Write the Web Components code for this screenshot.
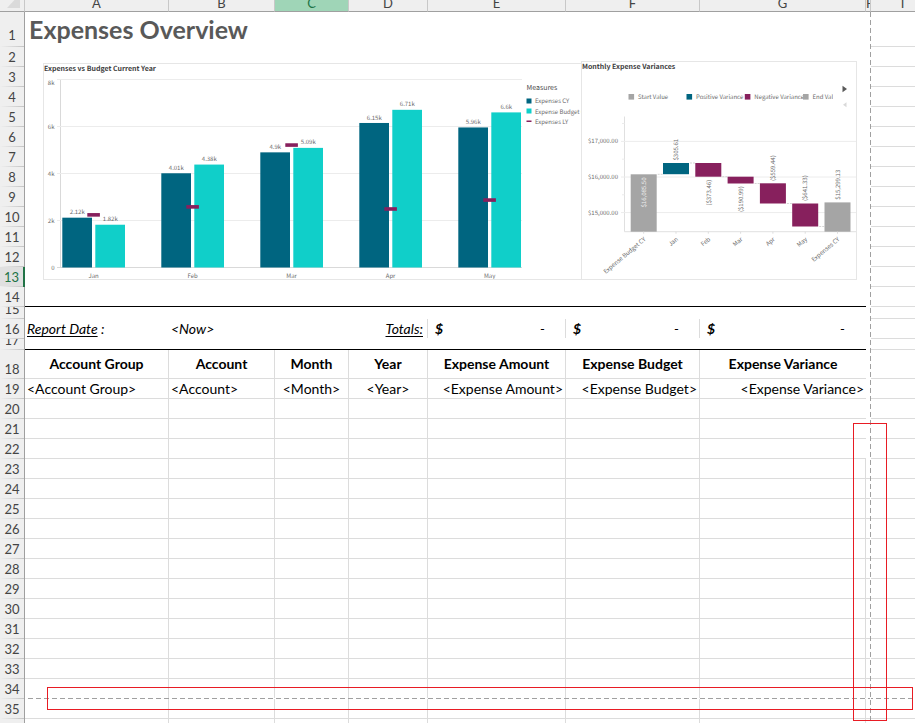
<!DOCTYPE html>
<html lang="en">
<head>
<meta charset="utf-8">
<title>Expenses Overview</title>
<style>
body {
  margin: 0;
  background: white;
  font-family: Lato, "Liberation Sans", sans-serif;
  font-size: 14px;
  color: black;
}
</style>
</head>
<body>
<work-sheet>
  <expense-bars slot="objects"></expense-bars>
  <variance-waterfall slot="objects"></variance-waterfall>
  <page-breaks slot="objects"></page-breaks>
</work-sheet>

<script>
var sheetTemplate = `
<style>
:host {
  --head: #efefef;
  --line: #dcdcdc;
  --edge: #a0a0a0;
  --accent: #217346;
  display: block;
  position: relative;
  height: 100vh;
  overflow: hidden;
}

table {
  table-layout: fixed;
  width: 935px;
  border-collapse: separate;
  border-spacing: 0;
  line-height: 16px;
}

th, td {
  box-sizing: border-box;
  padding: 0;
  border: 0 solid var(--line);
  text-align: left;
  vertical-align: top;
  white-space: nowrap;
  font-weight: normal;
}

th {
  font-size: 13px;
}

th > div, td > div {
  display: flex;
  box-sizing: border-box;
  align-items: flex-end;
  overflow: hidden;
}

thead th {
  background: var(--head);
  color: #444;
  border-bottom: 1px solid var(--edge);
  border-right: 1px solid #c8c8c8;
}

thead th > div {
  height: 11px;
  justify-content: center;
}

thead th.narrow > div {
  justify-content: flex-start;
}

thead th.selected {
  background: #9fd5b7;
  color: var(--accent);
}

.corner svg {
  display: block;
  margin-left: auto;
  margin-right: 3px;
}

tbody th {
  background: linear-gradient(to right, var(--head), #c4c4c4) bottom / 100% 1px no-repeat var(--head);
  color: #444;
  border-right: 1px solid var(--edge);
}

tbody th > div {
  justify-content: center;
}

tbody th.selected {
  background-color: #e0e0e0;
  color: var(--accent);
  border-right: 2px solid var(--accent);
}

td > div {
  padding: 0 2px 1px;
}

.lined td {
  border-right-width: 1px;
}

.lined td, td.outside {
  border-bottom-width: 1px;
}

td.outside {
  border-right-width: 0;
}

.short td.gutter, .open td.gutter {
  border-width: 0;
}

.lined td.gutter, .short td.last {
  border-right-width: 0;
}

.ruled td.inside {
  border-bottom: 1px solid black;
}

td.money {
  font-style: italic;
}

td.money > div {
  justify-content: space-between;
  padding: 0 21px 1px 7px;
}

.tick > div {
  box-shadow: inset -1px 0 var(--line);
}

.title {
  font-size: 25px;
  font-weight: bold;
  color: #595959;
  line-height: 32px;
}

.title > div {
  padding: 0 4px;
  align-items: center;
  overflow: visible;
}

.center > div {
  justify-content: center;
}

.right > div {
  justify-content: flex-end;
}

.middle > div {
  align-items: center;
}

.bold {
  font-weight: bold;
}

.italic {
  font-style: italic;
}

u {
  text-underline-offset: 2px;
}

.pad > div {
  padding-right: 5px;
}
</style>
<table>
  <colgroup as="cols"></colgroup>
  <thead><tr as="letters"></tr></thead>
  <tbody as="rows"></tbody>
</table>
<slot name="objects"></slot>
`;

var columns = [
  ["A", 144], ["B", 106], ["C", 74], ["D", 79], ["E", 138],
  ["F", 134], ["G", 166], ["H", 5], ["I", 64]
];

// row number: height, the rest are 20px
var heights = { 1: 35, 15: 12, 17: 11, 18: 29 };

var headStyles = { C: "selected", H: "narrow" };

var money = `<b>$</b><span>-</span>`;

var cells = {
  A1: ["title", "Expenses Overview"],
  A16: ["italic", "<u>Report Date</u>&nbsp;:"],
  B16: ["italic", "&lt;Now&gt;"],
  D16: ["italic right pad tick", "<u>Totals:</u>"],
  E16: ["money tick", money],
  F16: ["money tick", money],
  G16: ["money", money],
  A18: ["bold center middle", "Account Group"],
  B18: ["bold center middle", "Account"],
  C18: ["bold center middle", "Month"],
  D18: ["bold center middle", "Year"],
  E18: ["bold center middle", "Expense Amount"],
  F18: ["bold center middle", "Expense Budget"],
  G18: ["bold center middle", "Expense Variance"],
  A19: ["", "&lt;Account Group&gt;"],
  B19: ["", "&lt;Account&gt;"],
  C19: ["center", "&lt;Month&gt;"],
  D19: ["center", "&lt;Year&gt;"],
  E19: ["right", "&lt;Expense Amount&gt;"],
  F19: ["right", "&lt;Expense Budget&gt;"],
  G19: ["right", "&lt;Expense Variance&gt;"]
};

class WorkSheet extends HTMLElement {
  constructor() {
    super();
    var root = this.attachShadow({ mode: "open" });
    root.innerHTML = sheetTemplate;

    this.elements = {};
    for (var e of root.querySelectorAll("[as]")) {
      this.elements[e.getAttribute("as")] = e;
    }

    this.renderHead();
    this.renderRows();
  }

  renderHead() {
    var { cols, letters } = this.elements;
    cols.innerHTML = `<col style="width: 25px">` +
      columns.map(([, width]) => `<col style="width: ${width}px">`).join("");
    var corner = `<th class="corner"><svg width="14" height="11" viewBox="0 0 14 11"><path d="M13 -6V8H0Z" fill="#dadada"/></svg></th>`;
    letters.innerHTML = corner + columns.map(([name]) =>
      `<th scope="col" class="${headStyles[name] || ""}"><div>${name}</div></th>`
    ).join("");
  }

  renderRows() {
    var html = "";
    for (var row = 1; row <= 36; row++) {
      html += this.renderRow(row);
    }
    this.elements.rows.innerHTML = html;
  }

  renderRow(row) {
    var height = heights[row] || 20;
    var type = row >= 18 ? "lined" : "open";
    if (row >= 18 && row <= 22) type += " short";
    if (row == 14 || row == 17) type += " ruled";
    var label = row <= 35 ? row : "";
    var inset = row == 1 ? 4 : 2;
    var html = `<tr class="${type}"><th scope="row" class="${row == 13 ? "selected" : ""}">` +
      `<div style="height: ${height}px; padding-bottom: ${inset}px">${label}</div></th>`;
    for (var [name] of columns) {
      var [style, text] = cells[name + row] || ["", ""];
      var place = name == "I" ? "outside" : name == "H" ? "gutter" : name == "G" ? "inside last" : "inside";
      var content = text ? `<div style="height: ${height - 1}px">${text}</div>` : "";
      html += `<td class="${place} ${style}">${content}</td>`;
    }
    return html + "</tr>";
  }
}

var chartStyle = `
:host {
  display: block;
  position: absolute;
  box-sizing: border-box;
  border: 1px solid #e6e6e6;
  background: white;
  overflow: hidden;
  font-family: "Noto Sans CJK SC", "Open Sans", sans-serif;
  color: #404040;
  text-rendering: geometricPrecision;
}

figure {
  margin: 0;
}

figcaption {
  position: absolute;
  font-size: 7px;
  font-weight: bold;
  line-height: 10px;
  white-space: nowrap;
}

svg {
  display: block;
  font-size: 6px;
  fill: #6b6b6b;
}

.end {
  text-anchor: end;
}

.mid {
  text-anchor: middle;
}
`;

var teal = "#006580";
var aqua = "#10cfc9";
var plum = "#87205d";
var grey = "#a5a5a5";

class ExpenseBars extends HTMLElement {
  constructor() {
    super();
    var root = this.attachShadow({ mode: "open" });
    root.innerHTML = `
<style>
${chartStyle}
:host {
  left: 43px;
  top: 63px;
  width: 539px;
  height: 217px;
}
</style>
<figure>
  <figcaption>Expenses vs Budget Current Year</figcaption>
  <svg width="537" height="215" viewBox="44 64 537 215">${this.plot()}${this.legend()}</svg>
</figure>`;
  }

  plot() {
    var months = [
      ["Jan", 2.12, 1.82, 2.24],
      ["Feb", 4.01, 4.38, 2.58],
      ["Mar", 4.9, 5.09, 5.21],
      ["Apr", 6.15, 6.71, 2.49],
      ["May", 5.96, 6.6, 2.87]
    ];
    var y = v => 267.5 - v * 23.5;
    var svg = `<path d="M60.5 79V268" stroke="#d9d9d9" fill="none"/>`;
    for (var v of [0, 2, 4, 6, 8]) {
      svg += `<path d="M57 ${y(v)}H522" stroke="${v ? "#ececec" : "#d9d9d9"}"/>`;
      svg += `<text class="end" x="54.5" y="${v == 8 ? 84.5 : y(v) + 2}">${v ? v + "k" : 0}</text>`;
    }
    months.forEach(([name, cy, budget, ly], i) => {
      var x = 62.3 + i * 99;
      svg += `
        <rect x="${x}" y="${y(cy)}" width="29.7" height="${cy * 23.5}" fill="${teal}"/>
        <rect x="${x + 33}" y="${y(budget)}" width="29.7" height="${budget * 23.5}" fill="${aqua}"/>
        <rect x="${x + 25}" y="${y(ly) - 1.8}" width="12.6" height="3.6" fill="${plum}"/>
        <text class="mid" x="${x + 15}" y="${y(cy) - 3.4}">${cy}k</text>
        <text class="mid" x="${x + 48}" y="${y(budget) - 3.4}">${budget}k</text>
        <text class="mid" x="${x + 31.3}" y="277.7">${name}</text>`;
    });
    return svg;
  }

  legend() {
    return `
      <text x="526.5" y="90" font-size="7" fill="#505050">Measures</text>
      <rect x="526.5" y="98.5" width="5" height="5" fill="${teal}"/>
      <text x="535" y="103">Expenses CY</text>
      <rect x="526.5" y="108.5" width="5" height="5" fill="${aqua}"/>
      <text x="535" y="113.5">Expense Budget CY</text>
      <rect x="526.5" y="120.5" width="5" height="1.5" fill="${plum}"/>
      <text x="535" y="123.5">Expenses LY</text>`;
  }
}

class VarianceWaterfall extends HTMLElement {
  constructor() {
    super();
    var root = this.attachShadow({ mode: "open" });
    root.innerHTML = `
<style>
${chartStyle}
:host {
  left: 581px;
  top: 61px;
  width: 276px;
  height: 219px;
}
</style>
<figure>
  <figcaption>Monthly Expense Variances</figcaption>
  <svg width="274" height="217" viewBox="582 62 274 217">${this.legend()}${this.axis()}${this.bars()}</svg>
</figure>`;
  }

  legend() {
    var items = [
      [628.5, grey, "Start Value"],
      [686.5, teal, "Positive Variance"],
      [744.8, plum, "Negative Variance"],
      [803, grey, "End Value"]
    ];
    return `<clipPath id="scroll"><rect x="620" y="88" width="213" height="16"/></clipPath><g clip-path="url(#scroll)">` +
      items.map(([x, fill, label]) =>
        `<rect x="${x}" y="94" width="5.6" height="5.6" fill="${fill}"/><text x="${x + 9.5}" y="99">${label}</text>`
      ).join("") +
      `</g><path d="M842.5 85.8V92.2L847 89Z" fill="#595959"/><path d="M846.5 102.2V107.2L843 104.7Z" fill="#d9d9d9"/>`;
  }

  axis() {
    var svg = `<path d="M624.5 116.5V231.7H856" stroke="#e0e0e0" fill="none"/>`;
    for (var tick of [123.5, 159.2, 194.8]) {
      svg += `<path d="M622 ${tick}H624.5" stroke="#ececec"/>`;
    }
    [17, 16, 15].forEach((v, i) => {
      var y = 141.4 + i * 35.6;
      svg += `<path d="M621 ${y}H856" stroke="#ececec"/>`;
      svg += `<text class="end" x="618" y="${y + 2}">$${v},000.00</text>`;
    });
    return svg;
  }

  bars() {
    // name, top, bottom, fill, value, lower end of the value text, connector level
    var steps = [
      ["Expense Budget CY", 174.3, 231.7, grey, "$16,085.50", 207.5, 174.3],
      ["Jan", 163, 174.2, teal, "$305.61", 160.5, 163],
      ["Feb", 163, 176.7, plum, "($373.46)", 205.5, 176.7],
      ["Mar", 176.7, 183.5, plum, "($190.99)", 212, 183.5],
      ["Apr", 183.3, 203.5, plum, "($559.44)", 181, 203.5],
      ["May", 203.5, 226.5, plum, "($641.33)", 201, 226.5],
      ["Expenses CY", 202.4, 231.7, grey, "$15,299.13", 199.7]
    ];
    return steps.map(([name, top, bottom, fill, value, start, level], i) => {
      var x = 630.7 + i * 32.3;
      var link = level ? `<path d="M${x + 27} ${level}h5" stroke="#bbb" stroke-width=".6" stroke-dasharray="2 1"/>` : "";
      return `
        <rect x="${x}" y="${top}" width="26" height="${bottom - top}" fill="${fill}"/>
        ${link}
        <text transform="translate(${x + 15.2} ${start}) rotate(-90)" ${i ? "" : `fill="#f0f0f0"`}>${value}</text>
        <path d="M${x + 13} 231.7v2" stroke="#ddd"/>
        <text class="end" transform="translate(${x + 15.5} 240) rotate(-40)">${name}</text>`;
    }).join("");
  }
}

var breaksTemplate = `
<style>
:host {
  display: block;
  position: absolute;
  inset: 12px 0 0 25px;
  pointer-events: none;
}

div {
  position: absolute;
  box-sizing: border-box;
}

.across {
  top: 686px;
  left: 0;
  right: 0;
  height: 1px;
  background: repeating-linear-gradient(to right, white 0 3px, #a0a0a0 3px 8px);
}

.down {
  left: 845px;
  top: 0;
  bottom: 0;
  width: 1px;
  background: repeating-linear-gradient(#a0a0a0 0 5px, white 5px 8px);
}

.mark {
  border: 1px solid #e81c24;
}

.bottom {
  left: 22px;
  right: 2px;
  top: 675px;
  height: 23px;
}

.side {
  left: 828px;
  width: 34px;
  top: 411px;
  height: 298px;
}
</style>
<div class="across"></div>
<div class="down"></div>
<div class="mark bottom"></div>
<div class="mark side"></div>
`;

class PageBreaks extends HTMLElement {
  constructor() {
    super();
    this.attachShadow({ mode: "open" }).innerHTML = breaksTemplate;
  }
}

window.customElements.define("work-sheet", WorkSheet);
window.customElements.define("expense-bars", ExpenseBars);
window.customElements.define("variance-waterfall", VarianceWaterfall);
window.customElements.define("page-breaks", PageBreaks);
</script>
</body>
</html>
